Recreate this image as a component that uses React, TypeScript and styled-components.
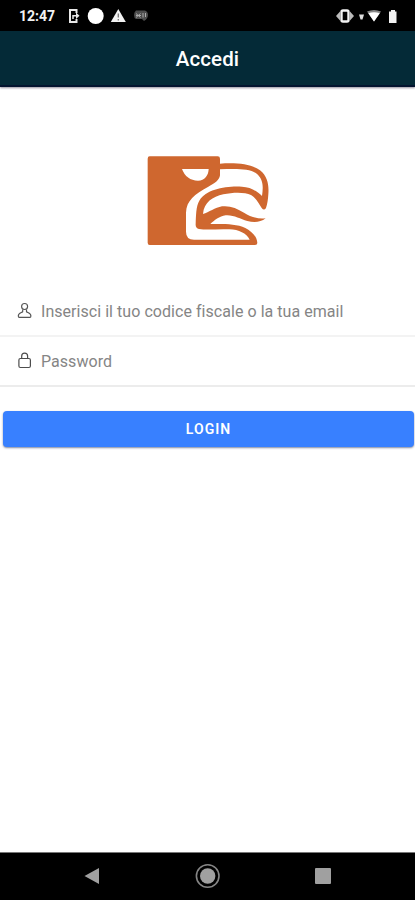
import React from "react";
import styled, { createGlobalStyle } from "styled-components";

const GlobalStyle = createGlobalStyle`
  *, *::before, *::after { box-sizing: border-box; }
  html, body { margin: 0; padding: 0; background: #fff; }
  body { font-family: Roboto, "Liberation Sans", sans-serif; overflow: hidden; }
`;

const Screen = styled.div`
  display: flex;
  flex-direction: column;
  width: 100%;
  height: 900px;
  background: #fff;
`;

const StatusBar = styled.div`
  display: flex;
  align-items: center;
  justify-content: space-between;
  flex: none;
  height: 31px;
  padding: 1px 18px 0 19px;
  background: #000;
`;

const StatusGroup = styled.div`
  display: flex;
  align-items: center;
`;

const Clock = styled.span`
  width: 38px;
  font-size: 14px;
  line-height: 16px;
  font-weight: 700;
  color: #f2f2f2;
`;

const Glyph = styled.svg`
  display: block;
  flex: none;
`;

const Toolbar = styled.header`
  display: flex;
  align-items: center;
  justify-content: center;
  flex: none;
  height: 56px;
  padding-top: 2px;
  background: #042a37;
  border-bottom: 2px solid #03142f;
  box-shadow: 0 1px 2px rgba(20, 10, 40, 0.45);
`;

const Title = styled.h1`
  margin: 0;
  font-size: 20.5px;
  line-height: 24px;
  font-weight: 500;
  letter-spacing: 0.1px;
  color: #fff;
`;

const Content = styled.main`
  display: flex;
  flex-direction: column;
  flex: 1;
`;

const Logo = styled.div`
  display: flex;
  justify-content: center;
  padding: 58px 0 32px 5px;
`;

const Field = styled.label<{ $line: string }>`
  display: flex;
  align-items: center;
  height: 50px;
  padding: 0 17px;
  border-bottom: 2px solid ${(p) => p.$line};
`;

const Input = styled.input`
  flex: 1;
  min-width: 0;
  margin-left: 8px;
  padding: 2px 0 0;
  border: 0;
  outline: 0;
  background: transparent;
  font-family: inherit;
  font-size: 16px;
  line-height: 20px;
  letter-spacing: 0.045px;
  color: #333;

  &::placeholder { color: #858585; opacity: 1; }
`;

const LoginButton = styled.button`
  height: 36px;
  margin: 24px 1px 0 3px;
  padding: 0;
  border: 0;
  border-radius: 4px;
  background: #3880ff;
  box-shadow: 0 1px 2px rgba(0, 20, 70, 0.5);
  font-family: inherit;
  font-size: 14px;
  font-weight: 600;
  letter-spacing: 1px;
  color: #fff;
`;

const NavBar = styled.nav`
  display: flex;
  align-items: center;
  justify-content: space-between;
  flex: none;
  height: 48px;
  padding: 0 84px 1px;
  background: #000;
  border-top: 1px solid #777;
`;

const EagleLogo = () => (
  <Glyph width="140" height="110" viewBox="0 0 420 330">
    <path
      fill="#cf672f"
      d="M29 34H233Q240 34 240 41V56C292 53 335 57 360 76C384 95 387 122 385 148C384 165 382 178 378 189Q372 198 365 189C356 176 349 159 333 150C314 141 279 142 250 148C218 155 192 172 189 207C207 202 225 188 246 184C269 181 291 190 312 203C333 216 355 223 377 220C362 232 342 233 322 228C300 222 281 209 257 211C238 214 223 226 211 237C246 237 287 235 316 249C336 260 351 275 352 294Q352 300 345 300H29Q23 300 23 293V41Q23 34 29 34Z"
    />
    <path
      fill="#fff"
      d="M240 73V91C238 105 225 115 205 125C164 148 139 166 138 203V260Q138 284 162 284H329C319 265 297 254 268 253C236 251 204 256 177 252Q166 249 167 237C168 211 168 184 178 167C199 132 259 122 306 125C331 126 351 138 366 153C370 125 370 105 352 88C331 69 285 72 240 73Z"
    />
    <path fill="#fff" d="M126 72C134 94 151 107 174 107C194 107 205 92 206 72Z" />
  </Glyph>
);

const PersonIcon = () => (
  <Glyph width="16" height="18" viewBox="0 0 16 18" fill="none" stroke="#555" strokeWidth="1.15">
    <circle cx="7.600" cy="4.500" r="3" />
    <path d="M5.700 7.500v2.200C4.200 10.800 1.300 11.100 1.300 14q0 1.400 1 1.400h10.600q1 0 1-1.400c0-2.900-2.900-3.200-4.400-4.300V7.500" strokeLinejoin="round" />
  </Glyph>
);

const LockIcon = () => (
  <Glyph width="16" height="18" viewBox="0 0 16 18" fill="none" stroke="#4d4d4d" strokeWidth="1.2">
    <rect x="1.900" y="6.500" width="11.500" height="9" rx="1.500" />
    <path d="M4.700 6.500V4a2.950 2.950 0 0 1 5.900 0v2.500" />
  </Glyph>
);

export default function App() {
  return (
    <Screen>
      <GlobalStyle />
      <StatusBar>
        <StatusGroup>
          <Clock>12:47</Clock>
          <Glyph width="92" height="18" viewBox="57 7 92 18">
            <path d="M76.500 13V10H70v12h6.500v-3" fill="none" stroke="#e8e8e8" strokeWidth="2" />
            <path d="M73 19v-3.200h4" fill="none" stroke="#e8e8e8" strokeWidth="1.500" />
            <path d="M76 12.500l3.500 3.300-3.500 3.200z" fill="#e8e8e8" />
            <circle cx="95.700" cy="16" r="8" fill="#fff" />
            <path d="M118.300 9l7.500 13h-15z" fill="#f2f2f2" />
            <path d="M118.300 13.500v4M118.300 19v1.500" stroke="#777" strokeWidth="1.300" />
            <path d="M136 10.500h9q3 1 3 4.500t-4 6l-2-2h-6q-2-1-2-4t2-4.500z" fill="#4c4c4c" />
            <path d="M136 13.500l4.500 4M140.500 13.500l-4.500 4M136 15.500h5M143 13v4.500M145.500 13v4" stroke="#aaa" strokeWidth="1" />
          </Glyph>
        </StatusGroup>
        <Glyph width="62" height="18" viewBox="335 7 62 18">
          <path d="M340 11.500l-4 4.500 4 4.500zM350 11.500l4 4.500-4 4.500z" fill="#bbb" />
          <rect x="341.500" y="10.500" width="7" height="11" rx="1.500" stroke="#f2f2f2" strokeWidth="2.400" />
          <path d="M359 14.500h5l-1.500 5h-2z" fill="#ddd" />
          <path d="M367 11.500q7-3 14 0l-7 10z" fill="#888" />
          <path d="M368.300 13.300q5.700-2 11.500 0L374 21.500z" fill="#fff" />
          <path d="M391 10h4v1.500h1.500V23H389V11.500h2z" fill="#f2f2f2" />
        </Glyph>
      </StatusBar>
      <Toolbar>
        <Title>Accedi</Title>
      </Toolbar>
      <Content>
        <Logo>
          <EagleLogo />
        </Logo>
        <Field $line="#f3f3f3">
          <PersonIcon />
          <Input type="text" placeholder="Inserisci il tuo codice fiscale o la tua email" />
        </Field>
        <Field $line="#ececec">
          <LockIcon />
          <Input type="password" placeholder="Password" />
        </Field>
        <LoginButton type="button">LOGIN</LoginButton>
      </Content>
      <NavBar>
        <Glyph width="16" height="18" viewBox="0 0 16 18">
          <path d="M.5 9L15 1v16z" fill="#a0a0a0" />
        </Glyph>
        <Glyph width="26" height="26" viewBox="0 0 26 26">
          <circle cx="12.700" cy="13" r="11.300" fill="none" stroke="#858585" strokeWidth="1.600" />
          <circle cx="12.700" cy="13" r="7.700" fill="#a0a0a0" />
        </Glyph>
        <Glyph width="16" height="16" viewBox="0 0 16 16">
          <rect width="16" height="16" rx="1" fill="#a0a0a0" />
        </Glyph>
      </NavBar>
    </Screen>
  );
}
